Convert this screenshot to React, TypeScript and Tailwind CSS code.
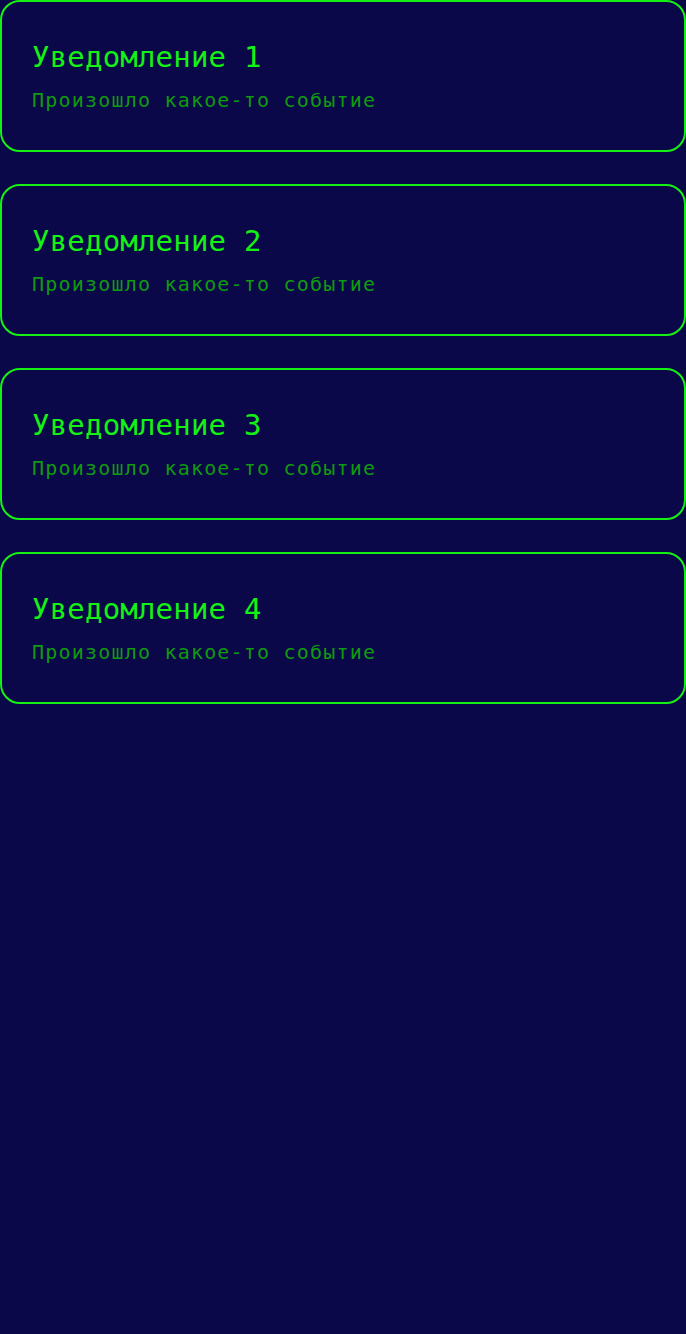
import React from 'react';

const notifications = [1, 2, 3, 4].map((n) => ({
  id: n,
  title: `Уведомление ${n}`,
  text: 'Произошло какое-то событие',
}));

export default function App() {
  return (
    <div className="min-h-screen w-full bg-[#0a0848] font-['DejaVu_Sans_Mono',monospace]">
      <div className="flex flex-col gap-[32px]">
        {notifications.map((item) => (
          <div
            key={item.id}
            className="h-[152px] rounded-[20px] border-2 border-[#14f214] px-[30px] pt-[37px]"
          >
            <div className="text-[29px] leading-[36px] tracking-[0.2px] text-[#14f214]">{item.title}</div>
            <div className="mt-[11px] text-[20px] leading-[28px] tracking-[1.2px] text-[#109a10]">{item.text}</div>
          </div>
        ))}
      </div>
    </div>
  );
}
